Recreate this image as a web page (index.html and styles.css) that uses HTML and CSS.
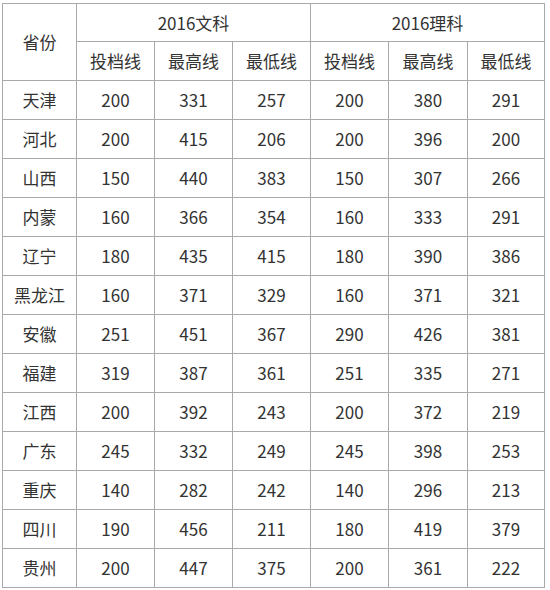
FILE: index.html
```html
<!DOCTYPE html>
<html lang="zh">
<head>
<meta charset="utf-8">
<link rel="stylesheet" href="styles.css">
</head>
<body>
<table class="scores">
  <colgroup>
    <col class="c-prov"><col class="c-n"><col class="c-n"><col class="c-n"><col class="c-n"><col class="c-n2"><col class="c-n3">
  </colgroup>
  <thead>
    <tr class="h1">
      <th rowspan="2">省份</th>
      <th colspan="3">2016文科</th>
      <th colspan="3">2016理科</th>
    </tr>
    <tr class="h2">
      <th>投档线</th><th>最高线</th><th>最低线</th>
      <th>投档线</th><th>最高线</th><th>最低线</th>
    </tr>
  </thead>
  <tbody>
    <tr><td>天津</td><td>200</td><td>331</td><td>257</td><td>200</td><td>380</td><td>291</td></tr>
    <tr><td>河北</td><td>200</td><td>415</td><td>206</td><td>200</td><td>396</td><td>200</td></tr>
    <tr><td>山西</td><td>150</td><td>440</td><td>383</td><td>150</td><td>307</td><td>266</td></tr>
    <tr><td>内蒙</td><td>160</td><td>366</td><td>354</td><td>160</td><td>333</td><td>291</td></tr>
    <tr><td>辽宁</td><td>180</td><td>435</td><td>415</td><td>180</td><td>390</td><td>386</td></tr>
    <tr><td>黑龙江</td><td>160</td><td>371</td><td>329</td><td>160</td><td>371</td><td>321</td></tr>
    <tr><td>安徽</td><td>251</td><td>451</td><td>367</td><td>290</td><td>426</td><td>381</td></tr>
    <tr><td>福建</td><td>319</td><td>387</td><td>361</td><td>251</td><td>335</td><td>271</td></tr>
    <tr><td>江西</td><td>200</td><td>392</td><td>243</td><td>200</td><td>372</td><td>219</td></tr>
    <tr><td>广东</td><td>245</td><td>332</td><td>249</td><td>245</td><td>398</td><td>253</td></tr>
    <tr><td>重庆</td><td>140</td><td>282</td><td>242</td><td>140</td><td>296</td><td>213</td></tr>
    <tr><td>四川</td><td>190</td><td>456</td><td>211</td><td>180</td><td>419</td><td>379</td></tr>
    <tr><td>贵州</td><td>200</td><td>447</td><td>375</td><td>200</td><td>361</td><td>222</td></tr>
  </tbody>
</table>
</body>
</html>
```
FILE: styles.css
```css
html, body {
  margin: 0;
  padding: 0;
  background: #fff;
}
body {
  padding: 3px 0 0 2px;
}
.scores {
  border-collapse: collapse;
  table-layout: fixed;
  width: 543px;
  border: 1px solid #333;
  font-family: "Noto Sans CJK SC", "Noto Sans", sans-serif;
  font-size: 17px;
  color: #333;
}
.c-prov { width: 74px; }
.c-n { width: 78px; }
.c-n2 { width: 79px; }
.c-n3 { width: 77px; }
.scores th,
.scores td {
  border: 1px solid #aaa;
  text-align: center;
  vertical-align: middle;
  font-weight: normal;
  padding: 0;
  line-height: 20px;
}
.scores .h1 th { height: 37px; }
.scores .h2 th { height: 38px; }
.scores tbody td { height: 38px; }
```
